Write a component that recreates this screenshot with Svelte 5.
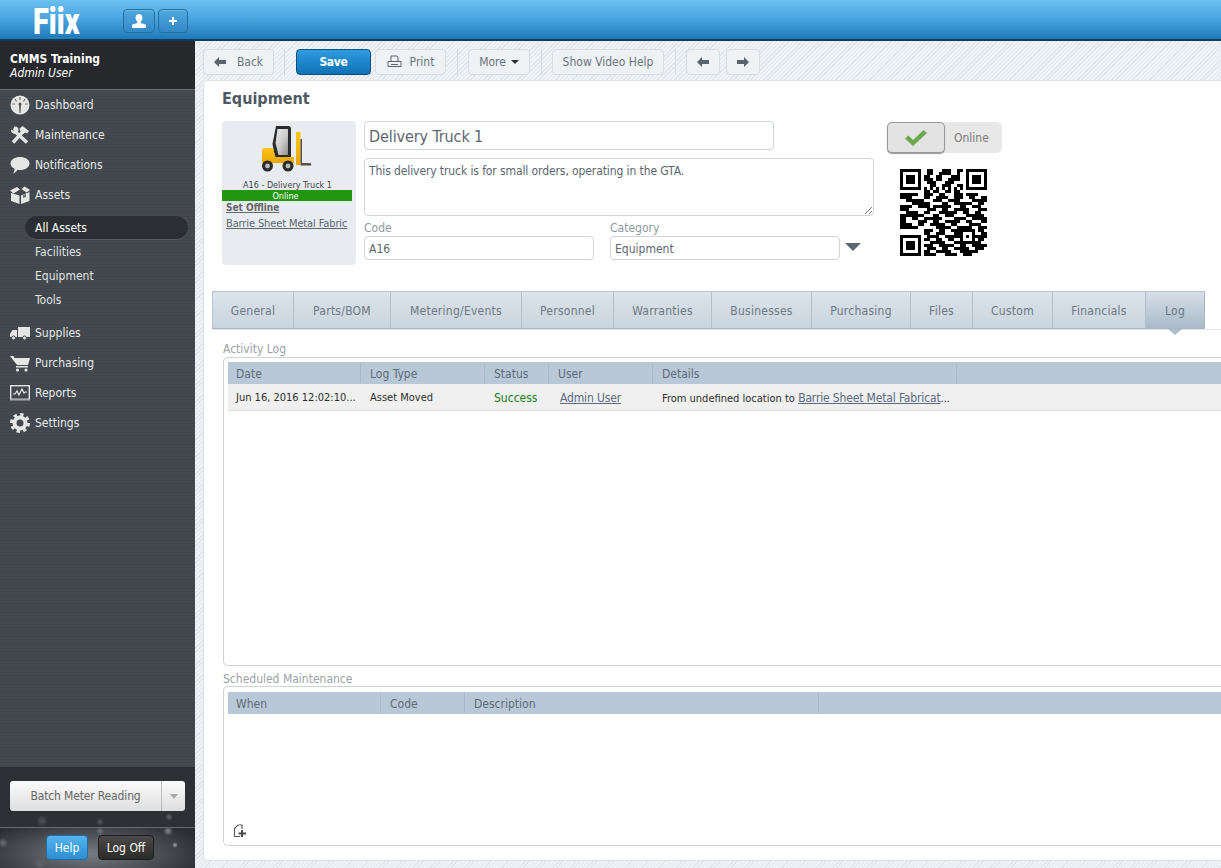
<script>
  const mid = [
    '0110001110011','0110011110010','1100110001110','1110110011110','0111000111000','0011001110011','1010101010101','1101100110110'
  ];
  const full = [
    '11111100111001100011101111000','11110000110011110011100110011','00111111000111001111000011111',
    '00001111110000110011111100110','11110011110111111000110011100','11100000011100110011111000111',
    '00111100110001111110011001100','11111111000110011100001111110','11001100111111000011110011111',
    '11000011100110011111001100011','11110011001111100110000111100','11111100000011111001111100111',
    '00000000111001100111111110110'
  ];
  const low = [
    '110011100011000100011','011110011111001101111','110011001100111100110','001111100011011111100',
    '111001111100110011111','011100110011111001110','110011111000111111000','111100011110011100000'
  ];
  function buildQr() {
    const g = Array.from({ length: 29 }, () => Array(29).fill(0));
    mid.forEach((r, y) => [...r].forEach((c, x) => (g[y][x + 8] = +c)));
    full.forEach((r, y) => [...r].forEach((c, x) => (g[y + 8][x] = +c)));
    low.forEach((r, y) => [...r].forEach((c, x) => (g[y + 21][x + 8] = +c)));
    const finder = (ox, oy) => {
      for (let y = 0; y < 7; y++)
        for (let x = 0; x < 7; x++) {
          const edge = x === 0 || y === 0 || x === 6 || y === 6;
          const core = x >= 2 && x <= 4 && y >= 2 && y <= 4;
          g[oy + y][ox + x] = edge || core ? 1 : 0;
        }
    };
    finder(0, 0);
    finder(22, 0);
    finder(0, 22);
    for (let i = 0; i < 8; i++) {
      g[7][i] = 0; g[i][7] = 0; g[7][28 - i] = 0; g[i][21] = 0; g[21][i] = 0; g[28 - i][7] = 0;
    }
    for (let y = 0; y < 5; y++)
      for (let x = 0; x < 5; x++) {
        const edge = x === 0 || y === 0 || x === 4 || y === 4;
        g[20 + y][20 + x] = edge || (x === 2 && y === 2) ? 1 : 0;
      }
    let d = '';
    g.forEach((r, y) => r.forEach((c, x) => { if (c) d += `M${x} ${y}h1v1h-1z`; }));
    return d;
  }
  const qr = buildQr();
  const tabs = [
    ['General', 82], ['Parts/BOM', 97], ['Metering/Events', 131], ['Personnel', 92], ['Warranties', 98],
    ['Businesses', 100], ['Purchasing', 99], ['Files', 62], ['Custom', 80], ['Financials', 93], ['Log', 59]
  ];
</script>

<div class="page">
  <header class="topbar">
    <div class="logo"><span>Fiix</span></div>
    <div class="topbtns">
      <button class="tb" aria-label="User">
        <svg width="16" height="14" viewBox="0 0 16 14"><path fill="#fff" d="M8 0c2.2 0 3.4 1.6 3.4 3.7 0 1.6-.7 3-1.6 3.8v1.2c0 .6 4.2 1 5.2 2.3V14H1v-3c1-1.300 5.200-1.700 5.200-2.300V7.500C5.300 6.700 4.600 5.300 4.600 3.700 4.600 1.600 5.800 0 8 0z"/></svg>
      </button>
      <button class="tb" aria-label="Add">
        <svg width="10" height="10" viewBox="0 0 10 10"><path fill="#fff" d="M4 1h2v3h3v2H6v3H4V6H1V4h3z"/></svg>
      </button>
    </div>
  </header>

  <div class="body">
    <aside class="sidebar">
      <div class="account">
        <div class="org">CMMS Training</div>
        <div class="who">Admin User</div>
      </div>
      <nav class="nav">
        <a class="item">
          <svg class="ic" viewBox="0 0 20 20"><circle cx="10" cy="10" r="9.500" fill="#e6e6e4"/><path d="M9 9.500 9.500 18h1l.5-8.500z" fill="#555"/><circle cx="10" cy="9" r="1.500" fill="#555"/><path d="M10 2v3M5 4l1.500 2.500M15 4l-1.500 2.500M2.500 9h2.500M15 9h2.500" stroke="#666" stroke-width="1.100"/></svg>
          Dashboard
        </a>
        <a class="item">
          <svg class="ic" viewBox="0 0 20 20">
            <path d="M3 17.500 13 6.500" stroke="#e6e6e4" stroke-width="3.400" fill="none"/>
            <path d="M9.500 3.500 12.500 1l6.500 5-2 2.500-2-1-1.500 1.500-3.500-3.500z" fill="#e6e6e4"/>
            <path d="M5 6.500 17 17.500" stroke="#e6e6e4" stroke-width="3.400" fill="none"/>
            <path d="M4.500 1.500 3 4.500 4.500 6 1 4.500C.5 7 3 9.500 6 8.500L8.500 6C9 3 7 1 4.500 1.500z" fill="#e6e6e4"/>
          </svg>
          Maintenance
        </a>
        <a class="item">
          <svg class="ic" viewBox="0 0 20 20"><path fill="#e6e6e4" d="M10 2c5 0 9.500 2.500 9.500 6.500S15 15 10 15c-1 0-1.500 0-2.500-.2C6.500 16.500 5 18 3 18.500c1-1.300 1.500-3 1.500-4.800C2 12.500.5 10.500.5 8.500.5 4.500 5 2 10 2z"/></svg>
          Notifications
        </a>
        <a class="item">
          <svg class="ic" viewBox="0 0 20 20"><path fill="#e6e6e4" d="M0 5.500 7 2l3 2.500L3.500 8.500zM11.500 4 14.500 1.500 20 5l-3.500 2.500zM1 8l8.500 2.500V19L1 16zM19.500 7v9L11 19v-8.500z"/><path fill="#6d7278" d="M13 10l3-1v3l-3 1z"/></svg>
          Assets
        </a>
        <div class="sub">
          <a class="subitem active">All Assets</a>
          <a class="subitem">Facilities</a>
          <a class="subitem">Equipment</a>
          <a class="subitem">Tools</a>
        </div>
        <a class="item">
          <svg class="ic" viewBox="0 0 20 20"><path fill="#e6e6e4" d="M8 4h12v10H8zM7 7v7H0v-3l2.500-4z"/><circle cx="3.500" cy="15" r="2" fill="#e6e6e4" stroke="#41474d"/><circle cx="14.500" cy="15" r="2" fill="#e6e6e4" stroke="#41474d"/></svg>
          Supplies
        </a>
        <a class="item">
          <svg class="ic" viewBox="0 0 20 20"><path fill="#e6e6e4" d="M0 3h3.500l1 2H20l-2 7H7z"/><rect x="6" y="13" width="12" height="1.500" fill="#e6e6e4"/><circle cx="7.500" cy="17" r="1.600" fill="#e6e6e4"/><circle cx="16" cy="17" r="1.600" fill="#e6e6e4"/></svg>
          Purchasing
        </a>
        <a class="item">
          <svg class="ic" viewBox="0 0 20 20"><rect x=".7" y="2.700" width="18.600" height="13.600" fill="none" stroke="#e6e6e4" stroke-width="1.400"/><rect x="0" y="16" width="20" height="1.500" fill="#a9acae"/><path d="M3 11h2l2-3 2 4 3-6 2 4 1-1h2" fill="none" stroke="#e6e6e4" stroke-width="1.200"/></svg>
          Reports
        </a>
        <a class="item">
          <svg class="ic" viewBox="0 0 20 20"><circle cx="10" cy="10" r="5.500" fill="none" stroke="#e6e6e4" stroke-width="4"/><circle cx="10" cy="10" r="8.300" fill="none" stroke="#e6e6e4" stroke-width="3.400" stroke-dasharray="3.300 3.200"/></svg>
          Settings
        </a>
      </nav>
      <div class="batch">
        <div class="split">
          <span class="split-main">Batch Meter Reading</span>
          <span class="split-caret"><i></i></span>
        </div>
      </div>
      <div class="foot">
        <button class="help">Help</button>
        <button class="logoff">Log Off</button>
      </div>
    </aside>

    <main class="main">
      <div class="toolbar">
        <button class="btn back">
          <svg width="12" height="10" viewBox="0 0 12 10"><path fill="#59646f" d="M0 5 5 0v3h7v4H5v3z"/></svg>
          Back
        </button>
        <span class="sep s1"></span>
        <button class="btn save">Save</button>
        <button class="btn print">
          <svg width="15" height="14" viewBox="0 0 15 14"><path fill="none" stroke="#59646f" d="M4 6V1h6l1 1.500V6M1 6.500h13v5H1zM4 9.500h7"/></svg>
          Print
        </button>
        <span class="sep s2"></span>
        <button class="btn more">More <i class="caret"></i></button>
        <span class="sep s3"></span>
        <button class="btn video">Show Video Help</button>
        <span class="sep s4"></span>
        <button class="btn arrow" aria-label="Previous">
          <svg width="12" height="10" viewBox="0 0 12 10"><path fill="#59646f" d="M0 5 5 0v3h7v4H5v3z"/></svg>
        </button>
        <button class="btn arrow a2" aria-label="Next">
          <svg width="12" height="10" viewBox="0 0 12 10"><path fill="#59646f" d="M12 5 7 0v3H0v4h7v3z"/></svg>
        </button>
      </div>

      <section class="card">
        <h1>Equipment</h1>
        <div class="head">
          <div class="assetcard">
            <svg class="fork" width="50" height="46" viewBox="0 0 50 46">
              <defs>
                <linearGradient id="glass" x1="0" y1="0" x2="1" y2="1"><stop offset="0" stop-color="#ececec"/><stop offset=".55" stop-color="#c9c9c9"/><stop offset="1" stop-color="#8f8f8f"/></linearGradient>
                <linearGradient id="yel" x1="0" y1="0" x2="0" y2="1"><stop offset="0" stop-color="#fcc71a"/><stop offset="1" stop-color="#e9a60a"/></linearGradient>
              </defs>
              <rect x="34" y="6" width="4.500" height="33" fill="url(#yel)"/>
              <path fill="#55503f" d="M38.500 13h1.500v24h8.500l1 2.500H38.500z"/>
              <path fill="#2b2b2b" d="M14 0h12q3 0 3 3v29H13L10.500 18z"/>
              <path fill="url(#glass)" d="M15.500 3H26v26H16.500L13.500 17z"/>
              <path fill="url(#yel)" d="M2 22h9l2.500 9H32v6H0V25q0-3 2-3z"/>
              <circle cx="5.500" cy="40" r="5.500" fill="#2b2b2b"/><circle cx="5.500" cy="40" r="2.400" fill="#b9b9b9"/>
              <circle cx="26" cy="40" r="5.500" fill="#2b2b2b"/><circle cx="26" cy="40" r="2.400" fill="#b9b9b9"/>
            </svg>
            <div class="assetname">A16 - Delivery Truck 1</div>
            <div class="online-bar">Online</div>
            <a class="setoff">Set Offline</a>
            <a class="loc">Barrie Sheet Metal Fabric</a>
          </div>

          <div class="form">
            <div class="input name">Delivery Truck 1</div>
            <div class="desc">
              This delivery truck is for small orders, operating in the GTA.
              <svg class="grip" width="8" height="8" viewBox="0 0 8 8"><path d="M1 8 8 1M5 8l3-3" stroke="#777" stroke-width="1"/></svg>
            </div>
            <div class="row">
              <label class="field code"><span>Code</span><div class="input small">A16</div></label>
              <label class="field cat"><span>Category</span><div class="input small">Equipment</div></label>
              <i class="ddl"></i>
            </div>
          </div>

          <div class="status">
            <div class="toggle">
              <div class="knob">
                <svg width="22" height="16" viewBox="0 0 22 16"><path fill="#6fa84f" d="M0 8.500 3.500 5.500 8 10 18.500 0 22 3 8 16z"/></svg>
              </div>
              <span>Online</span>
            </div>
            <svg class="qr" width="87" height="87" viewBox="0 0 29 29" shape-rendering="crispEdges"><path d={qr} fill="#000"/></svg>
          </div>
        </div>

        <div class="tabsrow">
          <div class="tabs">
            {#each tabs as [t, w], i}
              <div class="tab" class:on={t === 'Log'} style="width:{w}px">{t}</div>
            {/each}
          </div>
        </div>

        <div class="section first">
          <div class="legend">Activity Log</div>
          <div class="box logbox">
            <table>
              <colgroup><col style="width:133px"/><col style="width:124px"/><col style="width:64px"/><col style="width:104px"/><col style="width:304px"/><col/></colgroup>
              <thead>
                <tr><th>Date</th><th>Log Type</th><th>Status</th><th>User</th><th>Details</th><th></th></tr>
              </thead>
              <tbody>
                <tr>
                  <td>Jun 16, 2016 12:02:10...</td>
                  <td>Asset Moved</td>
                  <td class="ok">Success</td>
                  <td class="usr"><a>Admin User</a></td>
                  <td class="details">From undefined location to&nbsp; <a>Barrie Sheet Metal Fabricat</a>...</td>
                  <td></td>
                </tr>
              </tbody>
            </table>
          </div>
        </div>

        <div class="section second">
          <div class="legend l2">Scheduled Maintenance</div>
          <div class="box schedbox">
            <table>
              <colgroup><col style="width:153px"/><col style="width:84px"/><col style="width:354px"/><col/></colgroup>
              <thead><tr><th>When</th><th>Code</th><th>Description</th><th></th></tr></thead>
            </table>
            <svg class="addicon" width="14" height="14" viewBox="0 0 14 14"><path fill="none" stroke="#5c5c5c" stroke-width="1.200" d="M7 12.500H1.500V4.500L5 1h4v4"/><path stroke="#4a4a4a" stroke-width="2" d="M9 6v7M5.500 9.500h7.500"/></svg>
          </div>
        </div>
      </section>
    </main>
  </div>
</div>

<style>
  :global(body) { margin: 0; overflow: hidden; }
  * { box-sizing: border-box; }
  button { font: inherit; font-stretch: inherit; padding: 0; cursor: pointer; }
  .page {
    width: 1221px; height: 868px; overflow: hidden; display: flex; flex-direction: column;
    font-family: "DejaVu Sans Condensed", "DejaVu Sans", sans-serif; font-stretch: condensed; font-size: 12px; color: #5b6670;
  }
  .topbar {
    height: 41px; flex: none; display: flex; align-items: flex-start;
    background: linear-gradient(#6cc0f2 0, #4ba6e0 45%, #1f7ab8 100%);
    border-bottom: 2px solid #0d3c5c;
  }
  .logo { width: 123px; height: 39px; flex: none; padding: 2px 0 0 33px; }
  .logo span {
    display: inline-block; color: #fff; font: 900 37px/40px Roboto, sans-serif; transform: scaleX(.78); transform-origin: 0 0;
  }
  .topbtns { display: flex; gap: 3px; padding-top: 9px; }
  .tb {
    width: 32px; height: 24px; border: 1px solid #22709f; border-radius: 4px;
    background: linear-gradient(#4fa8e0, #3389c6); display: flex; align-items: center; justify-content: center;
    box-shadow: inset 0 1px 0 rgba(255,255,255,.2);
  }
  .tb + .tb { width: 30px; }
  .body { flex: 1; display: flex; min-height: 0; }
  .sidebar {
    width: 195px; flex: none; display: flex; flex-direction: column;
    background: repeating-linear-gradient(0deg, #3f454b 0 1px, #43494f 1px 3px);
    color: #e9eaeb;
  }
  .account { height: 49px; padding: 11px 10px 0; background: #26282c; border-bottom: 1px solid #6a7075; line-height: 14px; color: #fff; }
  .org { font-weight: 700; font-size: 12px; }
  .who { font-style: italic; font-size: 12px; }
  .nav { flex: 1; }
  .item { height: 30px; display: flex; align-items: center; gap: 5px; padding-left: 10px; }
  .ic { width: 20px; height: 20px; flex: none; }
  .sub { padding: 6px 7px 6px 25px; }
  .subitem { display: block; height: 24px; line-height: 24px; padding-left: 10px; font-size: 12px; color: #e2e4e6; }
  .active { border-radius: 12px; background: #2b2f34; border-bottom: 1px solid #565c62; color: #fff; }
  .batch {
    height: 60px; flex: none; padding: 14px 10px 0;
    background:
      radial-gradient(circle 6px at 42px 54px, rgba(120,125,130,.45), transparent),
      radial-gradient(circle 4px at 100px 55px, rgba(130,135,140,.5), transparent),
      radial-gradient(circle 4px at 169px 50px, rgba(150,155,160,.5), transparent),
      #2d3136;
  }
  .split {
    height: 30px; width: 175px; display: flex; border-radius: 3px; background: linear-gradient(#fbfbfb, #dedede); color: #666; letter-spacing: -.15px;
  }
  .split-main { flex: 1; text-align: center; line-height: 31px; border-right: 1px solid #bcbcbc; }
  .split-caret { width: 23px; display: flex; align-items: center; justify-content: center; }
  .split-caret i { border: 4px solid transparent; border-top: 5px solid #aaa; border-bottom: 0; }
  .foot {
    height: 41px; flex: none; display: flex; padding: 7px 0 0 46px; gap: 10px;
    border-top: 1px solid #666b70;
    background:
      radial-gradient(circle 5px at 168px 3px, rgba(170,175,180,.7), transparent),
      radial-gradient(circle 5px at 3px 15px, rgba(130,135,140,.7), transparent),
      radial-gradient(circle 3px at 175px 17px, rgba(190,195,200,.8), transparent),
      radial-gradient(circle 6px at 40px 36px, rgba(110,115,120,.5), transparent),
      radial-gradient(circle 4px at 100px 3px, rgba(160,165,170,.5), transparent),
      radial-gradient(ellipse 120px 36px at 90px 26px, #777c81, transparent),
      #2a2d31;
  }
  .help {
    width: 42px; height: 25px; border: 1px solid #1f6ea8; border-radius: 4px; color: #fff;
    background: linear-gradient(#56b4ee, #2c8ed2);
  }
  .logoff {
    width: 56px; height: 25px; border: 1px solid #1d1d1d; border-radius: 4px; color: #fff;
    background: linear-gradient(#4b4a48, #2c2b2a);
  }
  .main {
    flex: 1; min-width: 0; display: flex; flex-direction: column;
    background: repeating-linear-gradient(135deg, #dfe6ec 0 1px, #eff3f6 1px 3px);
    padding-left: 8px; padding-bottom: 7px;
  }
  .toolbar { height: 39px; flex: none; display: flex; align-items: flex-start; padding-top: 8px; }
  .btn {
    height: 26px; border: 1px solid #d5dce2; border-radius: 4px; background: #eef2f5; color: #6a7580;
    display: inline-flex; align-items: center; justify-content: center; gap: 6px;
  }
  .back { width: 71px; gap: 11px; }
  .sep { width: 1px; height: 26px; background: #d3dae0; }
  .s1 { margin: 0 11px 0 10px; }
  .save {
    width: 75px; height: 26px; color: #fff; font-weight: 700; letter-spacing: -.3px; border: 1px solid #0f4f7e;
    background: linear-gradient(#2f9bdf, #0e72b5);
  }
  .print { width: 71px; margin-left: 4px; gap: 8px; }
  .s2 { margin: 0 10px 0 11px; }
  .more { width: 62px; gap: 5px; }
  .caret { border: 4px solid transparent; border-top: 4px solid #2b2b2b; border-bottom: 0; display: inline-block; }
  .s3 { margin: 0 10px 0 11px; }
  .video { width: 112px; }
  .s4 { margin: 0 10px 0 11px; }
  .arrow { width: 34px; }
  .a2 { margin-left: 6px; }
  .card {
    flex: 1; min-height: 0; width: 1030px; background: #fff; border: 1px solid #dce2e7; border-radius: 5px;
    padding: 0 0 0 18px; display: flex; flex-direction: column;
  }
  h1 { margin: 0; height: 40px; font-size: 16px; font-weight: 700; line-height: 36px; color: #4e5964; }
  .head { height: 170px; flex: none; display: flex; }
  .assetcard {
    width: 134px; height: 144px; background: #e8ecf0; border-radius: 4px; display: flex; flex-direction: column; padding-top: 5px;
  }
  .fork { margin-left: 40px; flex: none; }
  .assetname { margin-top: 6px; height: 12px; text-align: center; font-size: 9px; line-height: 14px; color: #444; padding-right: 3px; }
  .online-bar { height: 11px; background: #22960f; color: #fff; text-align: center; font-size: 9px; line-height: 12px; width: 130px; padding-right: 3px; }
  .setoff { padding-left: 4px; font-weight: 700; font-size: 10px; line-height: 14px; color: #666; text-decoration: underline; }
  .loc { padding-left: 4px; font-size: 11px; line-height: 15px; margin-top: 1px; color: #5b6670; text-decoration: underline; white-space: nowrap; letter-spacing: -.12px; }
  .form { width: 510px; margin-left: 8px; }
  .input { border: 1px solid #cfd5da; border-radius: 4px; color: #5b6670; background: #fff; }
  .name { width: 410px; height: 29px; padding-left: 4px; font-size: 16px; line-height: 29px; letter-spacing: -.1px; }
  .desc {
    position: relative; margin-top: 8px; height: 58px; border: 1px solid #cfd5da; border-radius: 4px; padding: 5px 4px; line-height: 15px; letter-spacing: -.1px;
  }
  .grip { position: absolute; right: 1px; bottom: 1px; }
  .row { display: flex; margin-top: 5px; position: relative; }
  .field { display: block; }
  .field span { display: block; color: #9199a0; line-height: 15px; height: 15px; }
  .code { width: 230px; margin-right: 16px; }
  .cat { width: 230px; }
  .small { height: 24px; padding-left: 4px; line-height: 24px; }
  .ddl { margin: 22px 0 0 5px; width: 0; height: 0; border: 8px solid transparent; border-top: 8px solid #5b6670; border-bottom: 0; }
  .status { margin-left: 13px; width: 115px; }
  .toggle {
    margin-top: 1px; width: 115px; height: 31px; background: #e8e8e8; border-radius: 5px; display: flex; align-items: center; color: #7a7a7a;
  }
  .toggle span { margin-left: 9px; }
  .knob {
    width: 58px; height: 31px; border: 1px solid #999; border-radius: 5px; background: #e3e3e3;
    display: flex; align-items: center; justify-content: center; box-shadow: 0 1px 1px #999;
  }
  .qr { display: block; margin: 16px 0 0 13px; }
  .tabsrow { margin-left: -10px; height: 39px; flex: none; border-bottom: 1px solid #e2e6ea; }
  .tabs { display: flex; width: 993px; }
  .tab {
    height: 38px; line-height: 39px; text-align: center; color: #6d7883; font-size: 12px; letter-spacing: .25px;
    background: linear-gradient(#dce4eb, #c8d4de);
    border-top: 1px solid #b7c4d0; border-bottom: 1px solid #a8b7c6; border-right: 1px solid #b3c0cc; position: relative;
  }
  .tab:first-child { border-left: 1px solid #b7c4d0; }
  .on { background: linear-gradient(#d6dfe7, #a9bac9); border-right: 1px solid #a6b4c1; }
  .on::after {
    content: ""; position: absolute; left: 50%; margin-left: -7px; top: 37px; border: 7px solid transparent; border-top: 6px solid #aebdcb; border-bottom: 0;
  }
  .section { flex: none; }
  .first { padding-top: 10px; }
  .second { padding-top: 4px; }
  .legend { color: #9ba1a7; line-height: 19px; height: 17px; margin-left: 1px; }
  .l2 { height: 16px; line-height: 18px; }
  .box { margin-left: 1px; border: 1px solid #cfd3d6; border-right: 0; border-radius: 5px 0 0 5px; padding: 4px 0 0 4px; position: relative; }
  .logbox { height: 309px; }
  .schedbox { height: 160px; padding-top: 5px; }
  table { width: 1000px; border-collapse: collapse; table-layout: fixed; }
  th {
    height: 22px; padding: 2px 0 0 8px; text-align: left; font-weight: 400; color: #5f6b77; background: #b9c8d7; position: relative;
  }
  th + th { padding-left: 9px; }
  th::after { content: ""; position: absolute; right: 0; top: 1px; bottom: 1px; width: 1px; background: #a9b9c9; }
  th:last-child::after { display: none; }
  td {
    height: 26px; padding: 2px 0 0 8px; background: #f0f0f0; color: #2f2f2f; font-size: 11px; border-bottom: 1px solid #dddddd; white-space: nowrap; overflow: hidden;
  }
  td + td { padding-left: 9px; }
  td a { color: #5b6a80; text-decoration: underline; font-size: 12px; letter-spacing: -.15px; }
  .details a { margin-left: -3px; }
  .ok { color: #1a7d1a; font-size: 12px; }
  .usr { padding-left: 11px; }
  .addicon { position: absolute; left: 9px; bottom: 7px; }
</style>
